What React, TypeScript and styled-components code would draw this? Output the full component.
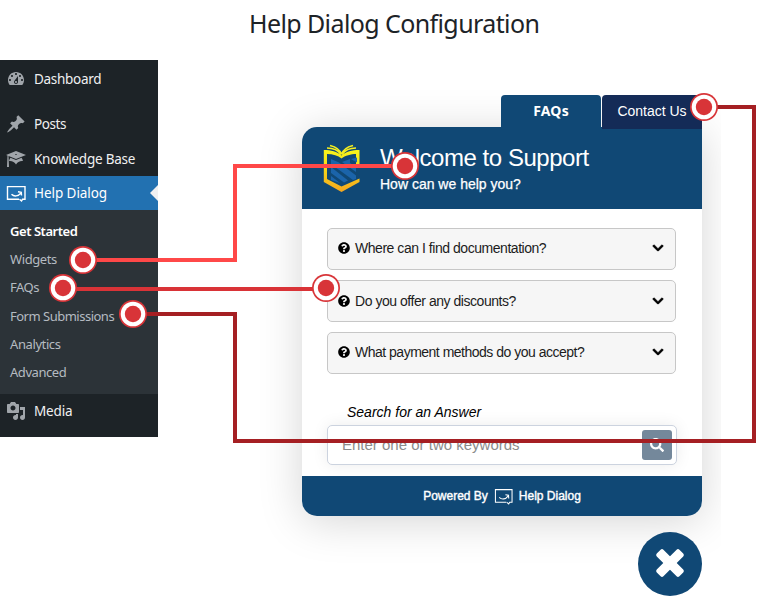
import React from "react";
import styled, { createGlobalStyle } from "styled-components";
import { FaChevronDown, FaQuestionCircle, FaSearch } from "react-icons/fa";

const GlobalStyle = createGlobalStyle`
  * { box-sizing: border-box; }
  body { margin: 0; background: #fff; }
`;

const navy = "#104875";

const Page = styled.div`
  position: relative;
  width: 764px;
  height: 604px;
  overflow: hidden;
  display: flex;
  flex-direction: column;
  background: #fff;
  font-family: "Liberation Sans", Arial, sans-serif;
`;

const Title = styled.h1`
  margin: 0;
  height: 60px;
  padding: 6px 0 0 249px;
  font: 400 25px/34px "Noto Sans", sans-serif;
  letter-spacing: -0.6px;
  color: #1d2327;
  white-space: nowrap;
`;

const Body = styled.div`
  flex: 1;
  display: flex;
  align-items: flex-start;
`;

const Sidebar = styled.nav`
  width: 158px;
  height: 377px;
  flex: none;
  background: #1d2327;
  font-family: "Noto Sans", sans-serif;
  color: #f0f0f1;
`;

const NavItem = styled.div<{ $h: number; $active?: boolean; $top?: number; $track?: number }>`
  height: ${(p) => p.$h}px;
  padding: ${(p) => p.$top ?? 0}px 0 0 6px;
  display: flex;
  align-items: center;
  gap: 8px;
  font-size: 13.5px;
  line-height: 20px;
  letter-spacing: ${(p) => p.$track ?? 0}px;
  white-space: nowrap;
  color: ${(p) => (p.$active ? "#fff" : "#f0f0f1")};
  background: ${(p) => (p.$active ? "#2271b1" : "transparent")};
`;

const NavIcon = styled.svg`
  width: 20px;
  height: 20px;
  flex: none;
  fill: #a0a5aa;
`;

const ActiveArrow = styled.span`
  margin-left: auto;
  border: 8px solid transparent;
  border-left: 0;
  border-right-color: #f0f0f1;
`;

const Submenu = styled.div`
  height: 184px;
  padding: 7px 0 0 10px;
  background: #2c3338;
`;

const SubItem = styled.div<{ $current?: boolean; $track?: number }>`
  height: 28.2px;
  font-size: 13px;
  line-height: 28px;
  letter-spacing: ${(p) => p.$track ?? 0}px;
  white-space: nowrap;
  font-weight: ${(p) => (p.$current ? 600 : 400)};
  color: ${(p) => (p.$current ? "#fff" : "#b5bbc1")};
`;

const Stage = styled.main`
  width: 563px;
  height: 544px;
  padding: 35px 0 0 144px;
  overflow: hidden;
`;

const Widget = styled.div`
  width: 400px;
  display: flex;
  flex-direction: column;
`;

const Tabs = styled.div`
  position: relative;
  z-index: 1;
  height: 32px;
  display: flex;
  justify-content: flex-end;
  gap: 1px;
`;

const Tab = styled.div<{ $selected?: boolean }>`
  width: 100px;
  height: ${(p) => (p.$selected ? 32 : 34)}px;
  border-radius: 4px 4px 0 0;
  background: ${(p) => (p.$selected ? navy : "#142b57")};
  color: #fff;
  font: ${(p) => (p.$selected ? '700 14px/32px "Noto Sans"' : '400 14px/32px "Liberation Sans"')}, sans-serif;
  letter-spacing: ${(p) => (p.$selected ? 0.2 : 0)}px;
  text-align: center;
`;

const Panel = styled.section`
  height: 389px;
  border-radius: 15px 0 15px 15px;
  background: #fff;
  box-shadow: 0 5px 44px rgba(0, 0, 0, 0.17);
  display: flex;
  flex-direction: column;
`;

const Header = styled.header`
  height: 82px;
  padding: 17px 0 0 20px;
  border-radius: 15px 0 0 0;
  background: ${navy};
  color: #fff;
  display: flex;
  gap: 18px;
`;

const Logo = styled.svg`
  width: 40px;
  height: 50px;
`;

const Welcome = styled.div`
  font-size: 24px;
  line-height: 27px;
  letter-spacing: -0.46px;
  white-space: nowrap;
`;

const Tagline = styled.div`
  margin-top: 4px;
  font-size: 14px;
  line-height: 18px;
  -webkit-text-stroke: 0.25px #fff;
`;

const Content = styled.div`
  height: 267px;
  padding: 19px 25px 0;
`;

const Question = styled.div<{ $drop?: number }>`
  width: 349px;
  height: 42px;
  margin-bottom: 10px;
  padding: 0 11px ${(p) => 2 - (p.$drop ?? 0)}px 10px;
  border: 1px solid #c7c7c7;
  border-radius: 5px;
  background: #f6f6f6;
  display: flex;
  align-items: center;
  color: #1c1c1c;
`;

const QuestionIcon = styled(FaQuestionCircle)`
  width: 12px;
  height: 12px;
  color: #000;
  flex: none;
`;

const QuestionText = styled.span<{ $track: number }>`
  flex: 1;
  margin-left: 5px;
  font-size: 14px;
  letter-spacing: ${(p) => p.$track}px;
  white-space: nowrap;
`;

const Chevron = styled(FaChevronDown)`
  width: 12px;
  height: 12px;
  overflow: visible;
  color: #000;
  stroke: #000;
  stroke-width: 30;
`;

const SearchLabel = styled.div`
  height: 16px;
  margin: 30px 0 5px 20px;
  font: italic 14px/16px "Liberation Sans", sans-serif;
  color: #000;
`;

const SearchBox = styled.div`
  width: 350px;
  height: 40px;
  padding: 0 4px 0 14px;
  border: 1px solid #ccd3df;
  border-radius: 5px;
  background: #fff;
  box-shadow: 0 0 16px rgba(0, 0, 0, 0.08);
  display: flex;
  align-items: center;
  justify-content: space-between;
  font-size: 15px;
  color: #8b8b8b;
`;

const Placeholder = styled.span`
  padding-bottom: 2px;
`;

const SearchButton = styled.span`
  width: 30px;
  height: 30px;
  border-radius: 3px;
  background: #74889b;
  color: #fff;
  display: flex;
  align-items: center;
  justify-content: center;
  font-size: 14px;
  stroke: #fff;
  stroke-width: 22;
`;

const Footer = styled.footer`
  height: 40px;
  border-radius: 0 0 15px 15px;
  background: ${navy};
  color: #fff;
  display: flex;
  align-items: center;
  justify-content: center;
  gap: 6px;
  font-size: 12px;
  -webkit-text-stroke: 0.4px #fff;
`;

const FooterText = styled.span`
  white-space: nowrap;
`;

const ScreenIcon = styled.svg<{ $w: number; $stroke: number }>`
  width: ${(p) => p.$w}px;
  height: 20px;
  flex: none;
  fill: none;
  stroke: #fff;
  stroke-width: ${(p) => p.$stroke};
`;

const CloseButton = styled.div`
  width: 64px;
  height: 64px;
  margin: 16px 0 0 336px;
  padding-bottom: 2px;
  border-radius: 50%;
  background: ${navy};
  display: flex;
  align-items: center;
  justify-content: center;
`;

const CloseMark = styled.svg`
  width: 32px;
  height: 32px;
  fill: #fff;
`;

const Connectors = styled.svg`
  position: absolute;
  inset: 0;
  z-index: 2;
  width: 764px;
  height: 604px;
  fill: none;
  stroke-width: 4;
`;

const icons = {
  dashboard:
    "M3.76 16h12.48c1.1-1.37 1.76-3.11 1.76-5 0-4.42-3.58-8-8-8s-8 3.58-8 8c0 1.89.66 3.63 1.76 5zM10 4c.55 0 1 .45 1 1s-.45 1-1 1-1-.45-1-1 .45-1 1-1zM6 6c.55 0 1 .45 1 1s-.45 1-1 1-1-.45-1-1 .45-1 1-1zm8 0c.55 0 1 .45 1 1s-.45 1-1 1-1-.45-1-1 .45-1 1-1zm-5.37 5.55L12 7v6c0 1.1-.9 2-2 2s-2-.9-2-2c0-.57.24-1.08.63-1.45zM4 10c.55 0 1 .45 1 1s-.45 1-1 1-1-.45-1-1 .45-1 1-1zm12 0c.55 0 1 .45 1 1s-.45 1-1 1-1-.45-1-1 .45-1 1-1zm-5 3c0-.55-.45-1-1-1s-1 .45-1 1 .45 1 1 1 1-.45 1-1z",
  pin: "M10.44 3.02l1.82-1.82 6.36 6.35-1.83 1.82c-1.05-.68-2.48-.57-3.41.36l-.75.75c-.92.93-1.04 2.35-.35 3.41l-1.83 1.82-2.41-2.41-2.8 2.79c-.42.42-3.38 2.71-3.8 2.29s1.86-3.39 2.28-3.81l2.79-2.79L4.1 9.36l1.83-1.82c1.05.69 2.48.57 3.4-.36l.75-.75c.93-.92 1.05-2.35.36-3.41z",
  learn:
    "M10 10L2.54 7.02 3 18H1l.48-11.41L0 6l10-4 10 4zm0-5c-.55 0-1 .22-1 .5s.45.5 1 .5 1-.22 1-.5-.45-.5-1-.5zm0 6l5.57-2.23c.71.94 1.2 2.07 1.36 3.3-.3-.04-.61-.07-.93-.07-2.55 0-4.78 1.37-6 3.41C8.78 13.37 6.55 12 4 12c-.32 0-.63.03-.93.07.16-1.23.65-2.36 1.36-3.3z",
  media:
    "M13 11V4c0-.55-.45-1-1-1h-1.67L9 1H5L3.67 3H2c-.55 0-1 .45-1 1v7c0 .55.45 1 1 1h10c.55 0 1-.45 1-1zM7 4.5c1.38 0 2.5 1.12 2.5 2.5S8.38 9.5 7 9.5 4.5 8.38 4.5 7 5.62 4.5 7 4.5zM14 6h5v10.5c0 1.38-1.12 2.5-2.5 2.5S14 17.88 14 16.5s1.12-2.5 2.5-2.5c.17 0 .34.02.5.05V9h-3V6zm-4 8.05V13h2v3.5c0 1.38-1.12 2.5-2.5 2.5S7 17.88 7 16.5 8.12 14 9.5 14c.17 0 .34.02.5.05z",
};

function Glyph({ name }: { name: keyof typeof icons }) {
  return (
    <NavIcon viewBox="0 0 20 20">
      <path fillRule="evenodd" d={icons[name]} />
    </NavIcon>
  );
}

function DialogIcon({ width, stroke }: { width: number; stroke: number }) {
  return (
    <ScreenIcon $w={width} $stroke={stroke} viewBox="0 0 20 20" preserveAspectRatio="none">
      <path d="M13 16.300H1.500V3.600h17.500v12.700h-2.500l-1 1.700-2-1.700M5.500 11.300c2.600 2.500 6.600 2.300 9.500-1.500M12 8.700l3.300.6.2 3.200" />
    </ScreenIcon>
  );
}

function BookLogo() {
  return (
    <Logo viewBox="0 0 40 50">
      <defs>
        <linearGradient id="gold" x1="0" y1="0" x2="0" y2="1">
          <stop offset="0" stopColor="#f8f51c" />
          <stop offset="0.4" stopColor="#f6dc19" />
          <stop offset="1" stopColor="#f5a61f" />
        </linearGradient>
      </defs>
      <path
        d="M1.800 6v32l17.700 10L37.500 38v-3.500L19.500 42.500 5 35V10c6 0 11 1.500 14.500 4.500C23 11.500 29 10 34 10v13h3.500V6C30 6 24 7.500 19.500 11.500 15 7.500 9 6 1.800 6z"
        fill="url(#gold)"
      />
      <path
        d="M5 4c6 0 11 2 14 6.500M8 1.500c6 1.500 10 4 11.500 9M34 4c-6 0-11 2-14 6.500M31 1.500c-6 1.500-10 4-11.500 9"
        fill="none"
        stroke="#f5ef1e"
        strokeWidth="1.700"
      />
      <path
        d="M9 15l8 3.500 17 13v3.500l-3 1L9 20zM9 23l17 13.500-4 2L9 29zM9 32l9 7-9-3zM20 18l8-3v4l6 4v5zM29 15l6-1.500v5z"
        fill="#1b64aa"
      />
    </Logo>
  );
}

const submenu = [
  { label: "Get Started", current: true, track: -0.45 },
  { label: "Widgets", track: -0.4 },
  { label: "FAQs", track: -0.5 },
  { label: "Form Submissions", track: -0.5 },
  { label: "Analytics", track: -0.4 },
  { label: "Advanced", track: -0.45 },
];

const questions = [
  { text: "Where can I find documentation?", drop: 0, track: -0.46 },
  { text: "Do you offer any discounts?", drop: 2, track: -0.46 },
  { text: "What payment methods do you accept?", drop: 0, track: -0.5 },
];

const markers = [
  [83, 260],
  [63, 288],
  [133, 314],
  [405, 166],
  [326, 288],
  [704, 107],
];

export default function App() {
  return (
    <Page>
      <GlobalStyle />
      <Title>Help Dialog Configuration</Title>
      <Body>
        <Sidebar>
          <NavItem $h={38} $track={-0.3}>
            <Glyph name="dashboard" />
            <span>Dashboard</span>
          </NavItem>
          <NavItem $h={43} $top={9} $track={-0.4}>
            <Glyph name="pin" />
            <span>Posts</span>
          </NavItem>
          <NavItem $h={35} $track={-0.24}>
            <Glyph name="learn" />
            <span>Knowledge Base</span>
          </NavItem>
          <NavItem $h={34} $active $track={-0.06}>
            <DialogIcon width={20} stroke={1.4} />
            <span>Help Dialog</span>
            <ActiveArrow />
          </NavItem>
          <Submenu>
            {submenu.map((s) => (
              <SubItem key={s.label} $current={s.current} $track={s.track}>
                {s.label}
              </SubItem>
            ))}
          </Submenu>
          <NavItem $h={34} $track={-0.15}>
            <Glyph name="media" />
            <span>Media</span>
          </NavItem>
        </Sidebar>
        <Stage>
          <Widget>
            <Tabs>
              <Tab $selected>FAQs</Tab>
              <Tab>Contact Us</Tab>
            </Tabs>
            <Panel>
              <Header>
                <BookLogo />
                <div>
                  <Welcome>Welcome to Support</Welcome>
                  <Tagline>How can we help you?</Tagline>
                </div>
              </Header>
              <Content>
                {questions.map((q) => (
                  <Question key={q.text} $drop={q.drop}>
                    <QuestionIcon />
                    <QuestionText $track={q.track}>{q.text}</QuestionText>
                    <Chevron />
                  </Question>
                ))}
                <SearchLabel>Search for an Answer</SearchLabel>
                <SearchBox>
                  <Placeholder>Enter one or two keywords</Placeholder>
                  <SearchButton>
                    <FaSearch />
                  </SearchButton>
                </SearchBox>
              </Content>
              <Footer>
                <FooterText>Powered By</FooterText>
                <DialogIcon width={19} stroke={1.1} />
                <FooterText>Help Dialog</FooterText>
              </Footer>
            </Panel>
            <CloseButton>
              <CloseMark viewBox="-16 -16 32 32">
                <rect x="-16" y="-4.7" width="32" height="9.4" rx="2" transform="rotate(45)" />
                <rect x="-16" y="-4.7" width="32" height="9.4" rx="2" transform="rotate(-45)" />
              </CloseMark>
            </CloseButton>
          </Widget>
        </Stage>
      </Body>
      <Connectors>
        <path d="M83 260H235V166H405" stroke="#ff4848" />
        <path d="M63 289H326" stroke="#d93337" />
        <path d="M133 314H235V441H754V107H704" stroke="#a51f23" />
        {markers.map(([x, y]) => (
          <g key={`${x}-${y}`} stroke="none">
            <circle cx={x} cy={y} r={14} fill="#d83438" />
            <circle cx={x} cy={y} r={12.3} fill="#fff" />
            <circle cx={x} cy={y} r={8.2} fill="#d83438" />
          </g>
        ))}
      </Connectors>
    </Page>
  );
}
